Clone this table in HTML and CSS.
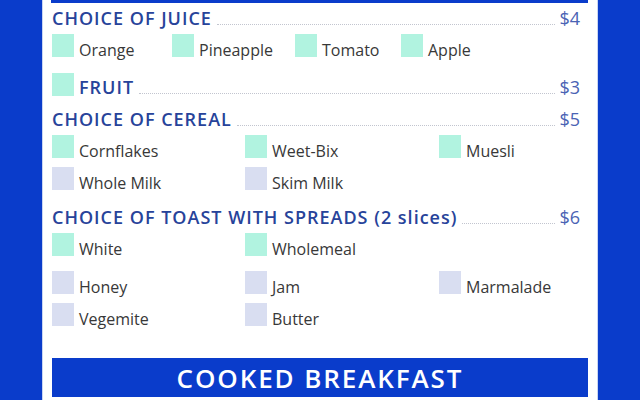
FILE: index.html
```html
<!DOCTYPE html>
<html>
<head>
<meta charset="utf-8">
<link rel="stylesheet" href="styles.css">
</head>
<body>
<div class="panel">
  <div class="topbar"></div>

  <div class="head h-juice">
    <span class="title">CHOICE OF JUICE</span><span class="leader"></span><span class="price">$4</span>
  </div>
  <div class="row juice-row">
    <div class="item"><span class="box mint"></span><span class="label">Orange</span></div>
    <div class="item"><span class="box mint"></span><span class="label">Pineapple</span></div>
    <div class="item"><span class="box mint"></span><span class="label">Tomato</span></div>
    <div class="item"><span class="box mint"></span><span class="label">Apple</span></div>
  </div>

  <div class="fruit-row">
    <span class="box mint"></span>
    <div class="head h-fruit">
      <span class="title">FRUIT</span><span class="leader"></span><span class="price">$3</span>
    </div>
  </div>

  <div class="head h-cereal">
    <span class="title">CHOICE OF CEREAL</span><span class="leader"></span><span class="price">$5</span>
  </div>
  <div class="row grid3 r-first">
    <div class="item"><span class="box mint"></span><span class="label">Cornflakes</span></div>
    <div class="item"><span class="box mint"></span><span class="label">Weet-Bix</span></div>
    <div class="item"><span class="box mint"></span><span class="label">Muesli</span></div>
  </div>
  <div class="row grid3 r-near">
    <div class="item"><span class="box lav"></span><span class="label">Whole Milk</span></div>
    <div class="item"><span class="box lav"></span><span class="label">Skim Milk</span></div>
  </div>

  <div class="head h-toast">
    <span class="title">CHOICE OF TOAST WITH SPREADS (2 slices)</span><span class="leader"></span><span class="price">$6</span>
  </div>
  <div class="row grid3 r-first">
    <div class="item"><span class="box mint"></span><span class="label">White</span></div>
    <div class="item"><span class="box mint"></span><span class="label">Wholemeal</span></div>
  </div>
  <div class="row grid3 r-far">
    <div class="item"><span class="box lav"></span><span class="label">Honey</span></div>
    <div class="item"><span class="box lav"></span><span class="label">Jam</span></div>
    <div class="item"><span class="box lav"></span><span class="label">Marmalade</span></div>
  </div>
  <div class="row grid3 r-near">
    <div class="item"><span class="box lav"></span><span class="label">Vegemite</span></div>
    <div class="item"><span class="box lav"></span><span class="label">Butter</span></div>
  </div>

  <div class="cooked">COOKED BREAKFAST</div>
</div>
</body>
</html>
```

FILE: styles.css
```css
html, body {
  margin: 0;
  padding: 0;
}
body {
  background: #0a3ccb;
  width: 640px;
  height: 400px;
  overflow: hidden;
  font-family: "Open Sans", "DejaVu Sans", sans-serif;
}
.panel {
  margin: 0 42px;
  height: 400px;
  background: #ffffff;
  padding: 0 10px 0 9px;
  box-sizing: border-box;
  box-shadow: inset 1px 0 0 #c9d5f2, inset -1px 0 0 #c9d5f2;
}
.topbar {
  height: 3px;
  background: #0a3ccb;
}
.head {
  display: flex;
  align-items: baseline;
  height: 22px;
  line-height: 22px;
  padding-left: 1px;
  padding-right: 8px;
}
.title {
  font-size: 18px;
  font-weight: 600;
  color: #27439a;
  letter-spacing: 1px;
  white-space: nowrap;
}
.leader {
  flex: 1;
  border-bottom: 1px dotted #c2c5cf;
  margin: 0 4px 0 5px;
  height: 0;
}
.price {
  font-size: 18px;
  color: #4a63b4;
}
.h-juice { margin-top: 4px; }
.h-cereal { margin-top: 10px; }
.h-toast { margin-top: 13px; }

.row {
  display: grid;
  padding-left: 1px;
}
.juice-row {
  grid-template-columns: 120px 123px 106px auto;
  margin-top: 5px;
}
.grid3 {
  grid-template-columns: 193px 194px auto;
}
.r-first { margin-top: 5px; }
.r-near { margin-top: 6px; }
.r-far { margin-top: 12px; }

.item {
  display: flex;
  align-items: flex-start;
  height: 26px;
}
.box {
  width: 22px;
  height: 23px;
  flex: none;
}
.mint { background: #b1f3e0; }
.lav { background: #d9def1; }
.label {
  margin-left: 5px;
  margin-top: 6px;
  font-size: 16px;
  line-height: 20px;
  color: #383838;
  white-space: nowrap;
}

.fruit-row {
  display: flex;
  align-items: flex-start;
  margin-top: 13px;
  padding-left: 1px;
  height: 25px;
}
.h-fruit {
  flex: 1;
  margin-top: 3px;
  padding-left: 5px;
}

.cooked {
  margin-top: 29px;
  height: 39px;
  margin-left: 1px;
  background: #0a3ccb;
  color: #ffffff;
  text-align: center;
  font-size: 26px;
  font-weight: 600;
  letter-spacing: 1.9px;
  line-height: 40px;
}
```
